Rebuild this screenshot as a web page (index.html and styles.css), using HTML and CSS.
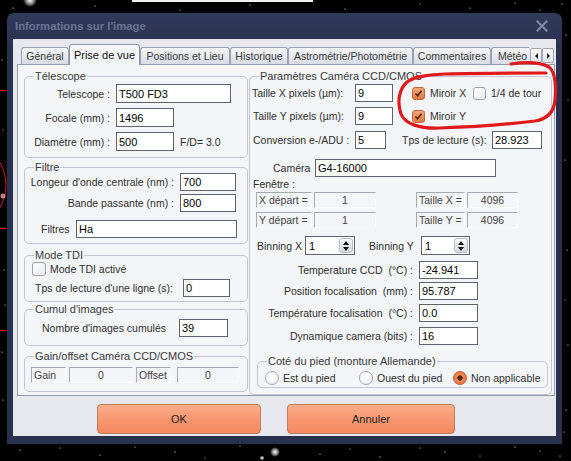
FILE: index.html
```html
<!DOCTYPE html>
<html lang="fr">
<head>
<meta charset="utf-8">
<title>Informations sur l'image</title>
<link rel="stylesheet" href="styles.css">
</head>
<body>
<svg class="sky" width="571" height="461" viewBox="0 0 571 461">
  <defs>
    <radialGradient id="glow">
      <stop offset="0" stop-color="#ffffff"/>
      <stop offset="0.35" stop-color="#d8d8d8" stop-opacity="0.85"/>
      <stop offset="1" stop-color="#ffffff" stop-opacity="0"/>
    </radialGradient>
  </defs>
  <rect x="132" y="0" width="181" height="2" fill="#f0f0f0"/>
  <circle cx="30" cy="0" r="7" fill="url(#glow)"/>
  <circle cx="275" cy="452" r="5" fill="url(#glow)"/>
  <circle cx="262" cy="458" r="2.5" fill="url(#glow)"/>
  <g fill="#ffffff">
    <circle cx="13" cy="8" r="0.6"/><circle cx="95" cy="6" r="0.6"/><circle cx="180" cy="10" r="0.5"/>
    <circle cx="250" cy="5" r="0.6"/><circle cx="345" cy="9" r="0.6"/><circle cx="420" cy="4" r="0.5"/>
    <circle cx="470" cy="8" r="0.6"/><circle cx="515" cy="3" r="0.6"/><circle cx="540" cy="10" r="0.5"/>
    <circle cx="562" cy="4" r="0.6"/><circle cx="2" cy="60" r="0.6"/><circle cx="3" cy="130" r="0.5"/>
    <circle cx="4" cy="270" r="0.6"/><circle cx="2" cy="352" r="0.6"/><circle cx="3" cy="400" r="0.6"/>
    <circle cx="5" cy="305" r="0.5"/><circle cx="566" cy="35" r="0.6"/><circle cx="568" cy="100" r="0.5"/>
    <circle cx="565" cy="160" r="0.6"/><circle cx="567" cy="250" r="0.6"/><circle cx="565" cy="300" r="0.5"/>
    <circle cx="568" cy="345" r="0.6"/><circle cx="566" cy="410" r="0.6"/><circle cx="564" cy="432" r="0.5"/>
    <circle cx="20" cy="450" r="0.6"/><circle cx="60" cy="448" r="0.5"/><circle cx="100" cy="455" r="0.6"/>
    <circle cx="135" cy="447" r="0.5"/><circle cx="175" cy="452" r="0.6"/><circle cx="205" cy="458" r="0.5"/>
    <circle cx="240" cy="446" r="0.5"/><circle cx="320" cy="454" r="0.6"/><circle cx="350" cy="449" r="0.5"/>
    <circle cx="380" cy="457" r="0.6"/><circle cx="420" cy="448" r="0.5"/><circle cx="445" cy="452" r="0.6"/>
    <circle cx="480" cy="456" r="0.5"/><circle cx="515" cy="447" r="0.6"/><circle cx="540" cy="451" r="0.5"/>
    <circle cx="560" cy="456" r="0.6"/>
  </g>
  <g stroke="#d01818" fill="none" stroke-width="1">
    <line x1="0" y1="90.5" x2="7" y2="90.5"/>
    <circle cx="-40" cy="185" r="46"/>
    <line x1="0" y1="228.5" x2="7" y2="228.5"/>
    <line x1="0" y1="330.5" x2="7" y2="330.5"/>
  </g>
  <circle cx="3" cy="196" r="2.5" fill="#e8a0a0" opacity="0.8"/>
</svg>

<div class="window">
  <div class="titlebar">
    <span class="title">Informations sur l'image</span>
    <svg class="close" width="12" height="12" viewBox="0 0 12 12"><path d="M1.5 1.5 L10.5 10.5 M10.5 1.5 L1.5 10.5" stroke="#7e87a1" stroke-width="2.2" stroke-linecap="square"/></svg>
  </div>
  <div class="client">
    <div class="tabs">
      <div class="strip">
        <div class="tab t-gen">Général</div>
        <div class="tab active t-pdv">Prise de vue</div>
        <div class="tab t-pos">Positions et Lieu</div>
        <div class="tab t-his">Historique</div>
        <div class="tab t-ast">Astrométrie/Photométrie</div>
        <div class="tab t-com">Commentaires</div>
        <div class="tab t-met">Météo</div>
      </div>
      <div class="arrows">
        <span class="arr"><i class="tri-l"></i></span>
        <span class="arr"><i class="tri-r"></i></span>
      </div>
    </div>

    <div class="panel">
      <div class="leftcol">
        <fieldset class="grp g-tele">
          <legend>Télescope</legend>
          <div class="row h19"><span class="lbl r w85">Telescope :</span><input class="inp h19 w115" value="T500 FD3"></div>
          <div class="row h19 mt5"><span class="lbl r w85">Focale (mm) :</span><input class="inp h19 w58" value="1496"></div>
          <div class="row h19 mt5"><span class="lbl r w85">Diamètre (mm) :</span><input class="inp h19 w58" value="500"><span class="lbl ml6">F/D= 3.0</span></div>
        </fieldset>

        <fieldset class="grp g-filt">
          <legend>Filtre</legend>
          <div class="row h18"><span class="lbl r w149">Longeur d'onde centrale (nm) :</span><input class="inp w56" value="700"></div>
          <div class="row h18 mt3"><span class="lbl r w149">Bande passante (nm) :</span><input class="inp w56" value="800"></div>
          <div class="row h18 mt8"><span class="lbl ml16 w35">Filtres</span><input class="inp w161" value="Ha"></div>
        </fieldset>

        <fieldset class="grp g-tdi">
          <legend>Mode TDI</legend>
          <div class="row h16"><span class="chk big ml7"></span><span class="lbl ml4">Mode TDI activé</span></div>
          <div class="row h18 mt2"><span class="lbl ml10 w148">Tps de lecture d'une ligne (s):</span><input class="inp w47" value="0"></div>
        </fieldset>

        <fieldset class="grp g-cum">
          <legend>Cumul d'images</legend>
          <div class="row h18"><span class="lbl ml17 w137">Nombre d'images cumulés</span><input class="inp w49" value="39"></div>
        </fieldset>

        <fieldset class="grp g-gain">
          <legend>Gain/offset Caméra CCD/CMOS</legend>
          <div class="row h16">
            <span class="box ml6 w35">Gain</span>
            <span class="box c ml3 w64">0</span>
            <span class="box ml3 w35">Offset</span>
            <span class="box c ml6 w62">0</span>
          </div>
        </fieldset>
      </div>

      <fieldset class="grp g-cam">
        <legend>Paramètres Caméra CCD/CMOS</legend>
        <div class="row h18">
          <span class="lbl ml2 w103">Taille X pixels (µm):</span><input class="inp w38" value="9">
          <span class="chk on ml19"><svg width="9" height="9" viewBox="0 0 9 9"><path d="M1.5 4.5 L3.6 6.8 L7.6 1.8" stroke="#5a2a12" stroke-width="1.7" fill="none"/></svg></span><span class="lbl ml5 w43">Miroir X</span>
          <span class="chk"></span><span class="lbl ml5">1/4 de tour</span>
        </div>
        <div class="row h18 mt5">
          <span class="lbl ml3 w102">Taille Y pixels (µm):</span><input class="inp w38" value="9">
          <span class="chk on ml19"><svg width="9" height="9" viewBox="0 0 9 9"><path d="M1.5 4.5 L3.6 6.8 L7.6 1.8" stroke="#5a2a12" stroke-width="1.7" fill="none"/></svg></span><span class="lbl ml5">Miroir Y</span>
        </div>
        <div class="row h18 mt6">
          <span class="lbl ml3 w102">Conversion e-/ADU :</span><input class="inp w31" value="5">
          <span class="lbl ml16 w90">Tps de lecture (s):</span><input class="inp w50" value="28.923">
        </div>
        <div class="row h18 mt10">
          <span class="lbl ml23 w42">Caméra</span><input class="inp w181" value="G4-16000">
        </div>
        <div class="row h12 mt1"><span class="lbl ml3">Fenêtre :</span></div>
        <div class="row h16 mt2">
          <span class="box ml6 w56">X départ =</span><span class="box c ml2 w62">1</span>
          <span class="box ml40 w49">Taille X =</span><span class="box c ml2 w51">4096</span>
        </div>
        <div class="row h16 mt4">
          <span class="box ml6 w56">Y départ =</span><span class="box c ml2 w62">1</span>
          <span class="box ml40 w49">Taille Y =</span><span class="box c ml2 w51">4096</span>
        </div>
        <div class="row h19 mt8">
          <span class="lbl ml7 w48">Binning X</span>
          <div class="spin w50"><span>1</span><span class="sbtn"><i class="up"></i><i class="dn"></i></span></div>
          <span class="lbl ml14 w52">Binning Y</span>
          <div class="spin w49"><span>1</span><span class="sbtn"><i class="up"></i><i class="dn"></i></span></div>
        </div>
        <div class="row h18 mt6"><span class="lbl r w163">Temperature CCD&nbsp; (°C) :</span><input class="inp w59" value="-24.941"></div>
        <div class="row h18 mt3"><span class="lbl r w163">Position focalisation&nbsp; (mm) :</span><input class="inp w59" value="95.787"></div>
        <div class="row h18 mt4"><span class="lbl r w163">Température focalisation&nbsp; (°C) :</span><input class="inp w59" value="0.0"></div>
        <div class="row h18 mt5"><span class="lbl r w163">Dynamique camera (bits) :</span><input class="inp w59" value="16"></div>

        <fieldset class="grp g-cote">
          <legend>Coté du pied (monture Allemande)</legend>
          <div class="row h16 mt3 radios">
            <span class="ritem w94"><span class="radio"></span><span class="lbl ml4">Est du pied</span></span>
            <span class="ritem w94"><span class="radio"></span><span class="lbl ml4">Ouest du pied</span></span>
            <span class="ritem"><span class="radio on"></span><span class="lbl ml4">Non applicable</span></span>
          </div>
        </fieldset>
      </fieldset>
    </div>

    <div class="buttons">
      <button class="btn ok" type="button">OK</button>
      <button class="btn cancel" type="button">Annuler</button>
    </div>
  </div>
</div>

<svg class="annot" width="571" height="461" viewBox="0 0 571 461">
  <path d="M511 64 C525 62 540 62 549 67 C556 72 556 90 555 100 C554 112 548 119 535 121 C510 124 470 127 440 128 C420 129 405 124 401 114 C397 102 399 90 406 83 C412 77 425 75 445 74 C480 73 520 73 546 73" stroke="#e01a1a" stroke-width="3.2" stroke-linecap="round" fill="none"/>
</svg>
</body>
</html>
```

FILE: styles.css
```css
* { box-sizing: border-box; }
html, body { margin: 0; padding: 0; }
body {
  width: 571px; height: 461px; overflow: hidden; position: relative;
  background: #000;
  font-family: "Liberation Sans", Arial, sans-serif;
  font-size: 10.5px; color: #2b2b2b;
}
.sky { position: absolute; left: 0; top: 0; }
.annot { position: absolute; left: 0; top: 0; pointer-events: none; z-index: 5; }

.window {
  position: relative; z-index: 1;
  margin: 13px 0 0 7px; width: 555px; height: 431px;
  background: linear-gradient(#313a5b, #29314f 40px, #29314f);
  border-radius: 7px 7px 0 0;
  padding: 0 6px 8px 6px;
  display: flex; flex-direction: column;
}
.titlebar { flex: 0 0 26px; height: 26px; display: flex; align-items: center; justify-content: space-between; padding: 0 8px 0 2px; }
.title { font-family: "Liberation Sans", sans-serif; font-weight: bold; font-size: 11.3px; color: #6b7493; }
.close { display: block; }

.client { flex: 1; background: #e6e8ee; padding: 0 1px 0 4px; display: flex; flex-direction: column; }

.tabs { position: relative; z-index: 2; flex: 0 0 26px; height: 26px; display: flex; align-items: flex-end; padding-left: 4px; }
.strip { display: flex; align-items: flex-end; width: 508px; height: 26px; overflow: hidden; }
.tab {
  flex: 0 0 auto; height: 17px; margin-bottom: 1px;
  border: 1px solid #9aa1b2; border-bottom: none; border-radius: 3px 3px 0 0;
  background: linear-gradient(#f5f6f9, #d9dce5);
  display: flex; align-items: center; justify-content: center;
  white-space: nowrap; color: #3a3a3a; line-height: 15px; overflow: hidden;
}
.tab.active { height: 21px; margin-bottom: 0; background: #f4f5f8; border-color: #8f96a8; color: #111; font-size: 11px; }
.t-gen { width: 48px; }
.t-pdv { width: 71px; }
.t-pos { width: 90px; }
.t-his { width: 58px; }
.t-ast { width: 125px; }
.t-com { width: 78px; }
.t-met { width: 48px; justify-content: flex-start; padding-left: 6px; }
.arrows { display: flex; margin: 0 0 2px 1px; }
.arr {
  width: 12px; height: 15px; border: 1px solid #a3a9b8; border-radius: 2px;
  background: linear-gradient(#fdfdfe, #e3e5eb);
  display: flex; align-items: center; justify-content: center;
}
.tri-l { width: 0; height: 0; border-top: 3px solid transparent; border-bottom: 3px solid transparent; border-right: 3px solid #222; }
.tri-r { width: 0; height: 0; border-top: 3px solid transparent; border-bottom: 3px solid transparent; border-left: 3px solid #222; }

.panel {
  position: relative; z-index: 1; margin-top: -1px;
  height: 332px; border: 1px solid #959cad; background: #f4f5f8;
  display: flex; gap: 1px; padding: 5px 0 0 6px;
}
.leftcol { width: 224px; flex: 0 0 224px; display: flex; flex-direction: column; }

fieldset.grp { margin: 0; padding: 0; border: 1px solid #c3c7d1; border-radius: 5px; min-width: 0; }
fieldset.grp > legend { padding: 0 1px; margin-left: 9px; height: 12px; line-height: 12px; font-size: 11px; color: #3a3a3a; white-space: nowrap; }

.g-tele { padding: 2px 0 6px 0 !important; }
.g-filt { margin-top: 3px !important; padding: 0 0 5px 0 !important; }
.g-tdi { margin-top: 5px !important; padding: 0 0 4px 0 !important; }
.g-cum { margin-top: 1px !important; padding: 4px 0 8px 0 !important; }
.g-gain { margin-top: 4px !important; padding: 5px 0 8px 0 !important; }
.g-cam { width: 303px; flex: 0 0 303px; padding: 2px 0 5px 0 !important; }
.g-cam > legend { margin-left: 8px; }
.g-cote { width: 291px; margin: 10px 0 0 7px !important; padding: 0 0 1px 0 !important; }
.g-cote > legend { margin-left: 10px; }

.row { display: flex; align-items: center; white-space: nowrap; }
.h12 { height: 12px; } .h16 { height: 16px; } .h18 { height: 18px; } .h19 { height: 19px; }
.mt1 { margin-top: 1px; } .mt2 { margin-top: 2px; } .mt3 { margin-top: 3px; } .mt4 { margin-top: 4px; }
.mt5 { margin-top: 5px; } .mt6 { margin-top: 6px; } .mt8 { margin-top: 8px; } .mt10 { margin-top: 10px; }
.ml2 { margin-left: 2px; } .ml3 { margin-left: 3px; } .ml4 { margin-left: 4px; } .ml5 { margin-left: 5px; }
.ml6 { margin-left: 6px; } .ml7 { margin-left: 7px; } .ml10 { margin-left: 10px; } .ml14 { margin-left: 14px; }
.ml16 { margin-left: 16px; } .ml17 { margin-left: 17px; } .ml19 { margin-left: 19px; } .ml23 { margin-left: 23px; }
.ml40 { margin-left: 40px; }

.lbl { display: block; flex: 0 0 auto; color: #2f2f2f; }
.lbl.r { text-align: right; margin-right: 6px; }
.w31 { width: 31px; } .w35 { width: 35px; } .w38 { width: 38px; } .w42 { width: 42px; } .w43 { width: 43px; }
.w47 { width: 47px; } .w48 { width: 48px; } .w49 { width: 49px; } .w50 { width: 50px; } .w51 { width: 51px; }
.w52 { width: 52px; } .w56 { width: 56px; } .w58 { width: 58px; } .w59 { width: 59px; } .w62 { width: 62px; }
.w64 { width: 64px; } .w85 { width: 85px; } .w90 { width: 90px; } .w94 { width: 94px; } .w102 { width: 102px; }
.w103 { width: 103px; } .w115 { width: 115px; } .w137 { width: 137px; } .w148 { width: 148px; } .w149 { width: 149px; }
.w161 { width: 161px; } .w163 { width: 163px; } .w181 { width: 181px; }

.inp {
  font: inherit; font-size: 11px; color: #000; height: 18px; margin: 0; padding: 0 2px;
  border: 1px solid #5f636e; background: #fff; outline: none; flex: 0 0 auto;
}
.inp.h19 { height: 19px; }

.box {
  display: flex; align-items: center; height: 16px; padding: 0 2px; flex: 0 0 auto;
  border: 1px solid; border-color: #a6aab5 #ffffff #ffffff #a6aab5;
  color: #444; white-space: nowrap; overflow: hidden;
}
.box.c { justify-content: center; }

.chk {
  display: flex; align-items: center; justify-content: center; flex: 0 0 auto;
  width: 13px; height: 13px; border: 1px solid #9aa1b2; border-radius: 3px;
  background: linear-gradient(135deg, #ffffff, #e8eaf0);
}
.chk.big { width: 14px; height: 14px; }
.chk.on { background: linear-gradient(#f4a47a, #e47947); border-color: #c0673c; }

.spin {
  display: flex; align-items: center; justify-content: space-between; flex: 0 0 auto;
  height: 19px; border: 1px solid #5f636e; background: #fff; color: #000; padding: 0 1px 0 3px; font-size: 11px;
}
.sbtn {
  width: 14px; height: 15px; border: 1px solid #b7bbc6; border-radius: 3px;
  background: linear-gradient(#fbfbfc, #d6d9e1);
  display: flex; flex-direction: column; align-items: center; justify-content: center; gap: 2px;
}
.up { width: 0; height: 0; border-left: 3.5px solid transparent; border-right: 3.5px solid transparent; border-bottom: 4px solid #111; }
.dn { width: 0; height: 0; border-left: 3.5px solid transparent; border-right: 3.5px solid transparent; border-top: 4px solid #111; }

.radios { padding-left: 7px; }
.ritem { display: flex; align-items: center; flex: 0 0 auto; }
.radio {
  display: block; flex: 0 0 auto; width: 14px; height: 14px; border-radius: 50%;
  border: 1px solid #a3a9b7; background: radial-gradient(circle at 40% 35%, #ffffff 30%, #e0e3ea);
}
.radio.on { border-color: #c25a2e; background: radial-gradient(circle, #5b2812 0 2.4px, #ef8b5d 3px, #e06a38 100%); }

.buttons { flex: 1; display: flex; padding: 8px 0 0 80px; gap: 26px; }
.btn {
  font: inherit; font-size: 11px; color: #222; margin: 0; padding: 0;
  width: 164px; height: 30px; border-radius: 4px;
  border: 1px solid #c07b5c;
  background: linear-gradient(#fbae8d, #f7976f 50%, #f48a60);
}
.btn.cancel { width: 168px; }
```
